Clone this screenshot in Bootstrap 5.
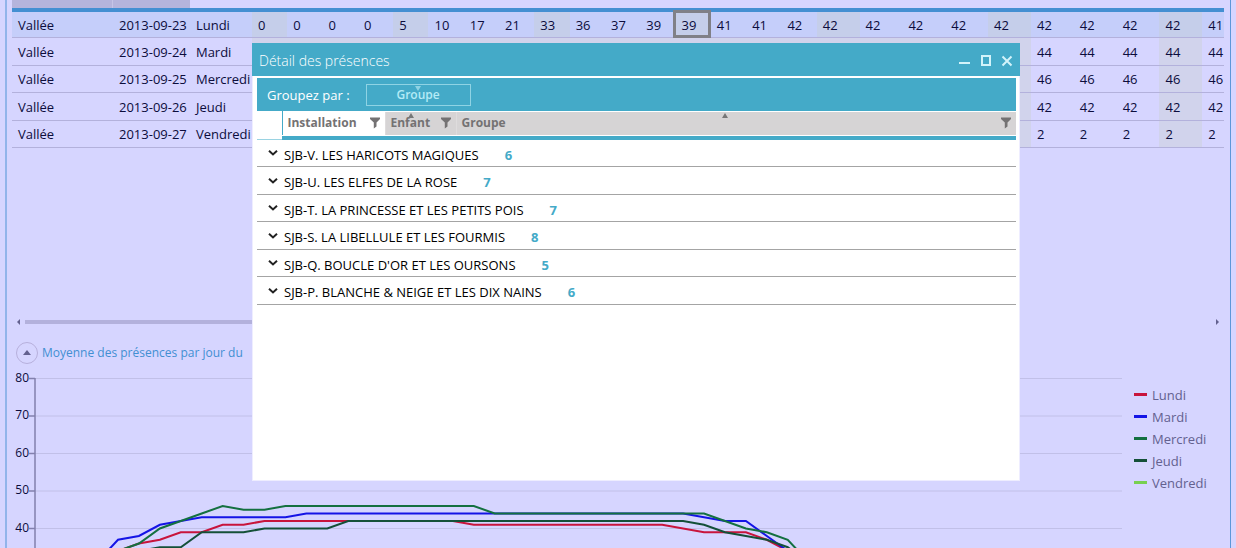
<!DOCTYPE html>
<html lang="fr">
<head>
<meta charset="utf-8">
<meta name="viewport" content="width=device-width, initial-scale=1">
<title>Détail des présences</title>
<link rel="stylesheet" href="https://cdn.jsdelivr.net/npm/bootstrap@5.3.0/dist/css/bootstrap.min.css">
<style>
body{background:#d6d5ff;font-family:"Open Sans","Noto Sans",sans-serif;font-size:13px;line-height:20px;color:#0c0c3c}
.panel{border-left:2px solid #92b4ea;border-right:1px solid #5c97d8;margin:0 5px 0 5px;padding:0 6px 0 5px}
.presence{table-layout:fixed;--bs-table-bg:transparent;--bs-table-color:#0c0c3c}
.presence th,.presence td{padding:1px 0 0 6px;height:27px;border-bottom:1px solid #b3b1dc;white-space:nowrap;vertical-align:middle}
.presence tbody tr:nth-child(even) td{height:28px}
.presence thead th{height:10px;border-bottom:4px solid #448fd2;padding:0;box-shadow:none}
.presence thead th.grip{background:#b5b4dc}
.presence thead th.grip+.grip{border-left:1px solid #c5c4e6}
.presence thead th.blank{background:#d6d5ff}
.presence .c-site{width:8.33%}.presence .c-date{width:6.35%}.presence .c-day{width:5.12%}
.presence .c-hour{width:2.913%}.presence .c-wide{width:3.535%}.presence .c-last{width:1.77%}
.presence .shade{background:#d1d3ec}
.presence tr.chosen td{background:#c5cefa}
.presence tr.chosen td.dim{background:#c5ceea}
.presence td.current{position:relative}
.presence td.current::after{content:"";position:absolute;inset:-2px 0 -1px -3px;border:3px solid #808087}
.track{height:12px;margin-top:168px}
.thumb{height:4px;width:70%;background:#b3b1dc;margin-left:4px}
.title-row{margin-top:14px}
.collapser{width:22px;height:22px;border:1px solid #b7b0dc;border-radius:50%;background:none;padding:0}
.chart-title{font-size:12px;color:#428fd2;white-space:nowrap}
.chart-row{margin-top:5px}
.scale-y{width:17px;height:168px}
.scale-y span{line-height:18px;font-size:12px}
.plot{height:179px;min-width:0}
.legend-box{width:94px;color:#63618f;padding-top:15px}
.legend-box li{height:22px;line-height:22px}
.swatch{width:13px;height:3px;margin-right:5px}
.dialog-win{position:absolute;left:252px;right:216px;top:43px;height:438px;background:#fff;border:1px solid #eeedff;border-top:0;color:#000}
.title-bar{background:#44aac8;color:#fff;height:33px;margin:0 -1px;padding:2px 3px 0 7px;font-size:14px;font-weight:300}
.title-bar button{border:0;background:none;padding:0;width:21px;height:20px;line-height:0}
.group-bar{background:#44aac8;color:#fff;height:33px;padding:0 10px}
.group-chip{border:1px solid #8fd3e4;background:none;color:#b4ebf6;width:105px;height:22px;line-height:20px;padding:0;position:relative;font-size:12px;font-weight:600}
.mini-arrow{position:absolute;left:50%;width:6px;height:5px;margin-left:-3px;top:1px}
.detail-body{margin:2px 3px 0 4px}
.detail{table-layout:fixed;--bs-table-bg:transparent;border-color:#a4a4a4}
.detail th{height:24px;padding:0 5px 2px;border:solid #fff;border-width:1px 0;background:#d6d4d5;color:#747273;position:relative;line-height:20px;box-shadow:none;font-size:12px}
.detail th+th+th{border-left:1px solid #dedcdd}
.detail th.lead-cell,.detail th.active-col{background:#fff}
.detail th.lead-cell{border-right:1px solid #44aac8}
.detail .bluebar td{height:4px;padding:0;background:#44aac8;border:0;box-shadow:none}
.detail .bluebar td:first-child{background:#fff;border-bottom:1px solid #9ad3e2}
.detail tbody td{height:27px;padding:5px 0 0 2px;border-bottom:1px solid #a4a4a4;line-height:20px;white-space:nowrap;color:#000}
.detail tbody tr:nth-child(even) td{height:28px}
.detail b{color:#44aac8;margin-left:26px}
.detail tbody td.chev{padding:0 0 0 11px;line-height:0;vertical-align:middle}
.funnel{width:10px;height:12px}
</style>
<script src="https://cdn.jsdelivr.net/npm/bootstrap@5.3.0/dist/js/bootstrap.bundle.min.js"></script>
</head>
<body class="vh-100 overflow-hidden position-relative">
<svg class="d-none" aria-hidden="true"><defs>
<symbol id="funnel" viewBox="0 0 10 12"><path d="M0 .5h10v1.500L6.500 5.500V9.500L3.800 11.500V5.500L0 2z" fill="#747273"/></symbol>
<symbol id="chev" viewBox="0 0 10 6"><path d="M1 .8 5 4.500 9 .8" fill="none" stroke="#222" stroke-width="2"/></symbol>
<symbol id="up" viewBox="0 0 6 5"><path d="M3 0 6 5H0z" fill="#777"/></symbol>
</defs></svg>
<main class="panel vh-100 overflow-hidden">
<table class="table presence mb-0">
<colgroup><col class="c-site"><col class="c-date"><col class="c-day">
<col class="c-hour shade"><col class="c-hour" span="3"><col class="c-hour shade"><col class="c-hour" span="3"><col class="c-hour shade"><col class="c-hour" span="3"><col class="c-hour shade"><col class="c-hour" span="3">
<col class="c-wide shade"><col class="c-wide" span="3"><col class="c-wide shade"><col class="c-wide" span="3"><col class="c-wide shade"><col class="c-last"></colgroup>
<thead><tr><th class="grip"></th><th class="grip"></th><th class="blank" colspan="27"></th></tr></thead>
<tbody>
<tr class="chosen"><td>Vallée</td><td>2013-09-23</td><td>Lundi</td><td class="dim">0</td><td>0</td><td>0</td><td>0</td><td class="dim">5</td><td>10</td><td>17</td><td>21</td><td class="dim">33</td><td>36</td><td>37</td><td>39</td><td class="dim current">39</td><td>41</td><td>41</td><td>42</td><td class="dim">42</td><td>42</td><td>42</td><td>42</td><td class="dim">42</td><td>42</td><td>42</td><td>42</td><td class="dim">42</td><td>41</td></tr>
<tr><td>Vallée</td><td>2013-09-24</td><td>Mardi</td><td colspan="21"></td><td>44</td><td>44</td><td>44</td><td>44</td><td>44</td></tr>
<tr><td>Vallée</td><td>2013-09-25</td><td>Mercredi</td><td colspan="21"></td><td>46</td><td>46</td><td>46</td><td>46</td><td>46</td></tr>
<tr><td>Vallée</td><td>2013-09-26</td><td>Jeudi</td><td colspan="21"></td><td>42</td><td>42</td><td>42</td><td>42</td><td>42</td></tr>
<tr><td>Vallée</td><td>2013-09-27</td><td>Vendredi</td><td colspan="21"></td><td>2</td><td>2</td><td>2</td><td>2</td><td>2</td></tr>
</tbody></table>
<div class="track d-flex align-items-center px-1">
<svg width="5" height="8"><path d="M4 1v6L1 4z" fill="#63618f"/></svg><div class="thumb"></div>
<svg class="ms-auto" width="5" height="8"><path d="M1 1v6L4 4z" fill="#63618f"/></svg>
</div>
<div class="title-row d-flex align-items-center px-1">
<button class="collapser d-flex align-items-center justify-content-center me-1" aria-label="Réduire"><svg width="8" height="5"><path d="M4 0 8 5H0z" fill="#63618f"/></svg></button>
<span class="chart-title">Moyenne des présences par jour du</span>
</div>
<section class="chart-row d-flex">
<div class="scale-y d-flex flex-column justify-content-between text-end"><span>80</span><span>70</span><span>60</span><span>50</span><span>40</span></div>
<svg class="plot flex-grow-1" viewBox="29 369 1093 179" preserveAspectRatio="none" fill="none">
<path d="M35 378.500H1122M35 416H1122M35 453.500H1122M35 491H1122M35 528.500H1122" stroke="#c1c0e8"/>
<path d="M29 378.500h6M29 416h6M29 453.500h6M29 491h6M29 528.500h6M35 378V548" stroke="#8280ad" stroke-width="1.500"/>
<g stroke-width="2" id="series"></g>
</svg>
<ul class="legend-box list-unstyled mb-0 ms-2 ps-1" id="legend"></ul>
</section>
</main>

<div class="dialog-win" role="dialog" aria-label="Détail des présences">
<div class="title-bar d-flex align-items-center"><span class="me-auto">Détail des présences</span>
<button aria-label="Réduire"><svg width="12" height="12"><path d="M0 8h11" stroke="#d2f3fa" stroke-width="2"/></svg></button>
<button aria-label="Agrandir"><svg width="12" height="12"><path d="M2 1h8v9H2z" fill="none" stroke="#d2f3fa" stroke-width="2"/></svg></button>
<button aria-label="Fermer"><svg width="12" height="12"><path d="M1.500 1.500l9 9M10.500 1.500l-9 9" stroke="#d2f3fa" stroke-width="2"/></svg></button></div>
<div class="detail-body">
<div class="group-bar d-flex align-items-center"><span>Groupez par :</span>
<button class="group-chip ms-3">Groupe<svg class="mini-arrow" viewBox="0 0 6 5"><path d="M0 0h6L3 5z" fill="#8fd3e4"/></svg></button></div>
<table class="table detail mb-0">
<colgroup><col style="width:25px"><col style="width:103px"><col style="width:71px"><col></colgroup>
<thead><tr><th class="lead-cell"></th>
<th class="active-col"><div class="d-flex justify-content-between align-items-center">Installation<svg class="funnel"><use href="#funnel"/></svg></div></th>
<th><div class="d-flex justify-content-between align-items-center">Enfant<svg class="funnel"><use href="#funnel"/></svg></div><svg class="mini-arrow" style="left:36%"><use href="#up"/></svg></th>
<th><div class="d-flex justify-content-between align-items-center">Groupe<svg class="funnel"><use href="#funnel"/></svg></div><svg class="mini-arrow" style="left:48%"><use href="#up"/></svg></th></tr>
<tr class="bluebar"><td></td><td colspan="3"></td></tr></thead>
<tbody>
<tr><td class="chev"><svg width="10" height="6"><use href="#chev"/></svg></td><td colspan="3">SJB-V. LES HARICOTS MAGIQUES<b>6</b></td></tr>
<tr><td class="chev"><svg width="10" height="6"><use href="#chev"/></svg></td><td colspan="3">SJB-U. LES ELFES DE LA ROSE<b>7</b></td></tr>
<tr><td class="chev"><svg width="10" height="6"><use href="#chev"/></svg></td><td colspan="3">SJB-T. LA PRINCESSE ET LES PETITS POIS<b>7</b></td></tr>
<tr><td class="chev"><svg width="10" height="6"><use href="#chev"/></svg></td><td colspan="3">SJB-S. LA LIBELLULE ET LES FOURMIS<b>8</b></td></tr>
<tr><td class="chev"><svg width="10" height="6"><use href="#chev"/></svg></td><td colspan="3">SJB-Q. BOUCLE D'OR ET LES OURSONS<b>5</b></td></tr>
<tr><td class="chev"><svg width="10" height="6"><use href="#chev"/></svg></td><td colspan="3">SJB-P. BLANCHE &amp; NEIGE ET LES DIX NAINS<b>6</b></td></tr>
</tbody></table>
</div></div>
<script>
// Each series: name, colour, then [index, value] turning points along the time axis
const series=[
["Lundi","#c8143c",[[0,34],[1,36],[2,37],[3,39],[4,39],[5,41],[6,41],[7,42],[16,42],[17,41],[26,41],[28,39],[30,39],[31,37],[32,34]]],
["Mardi","#1414e6",[[-1,31],[0,37],[1,38],[2,41],[3,42],[4,43],[8,43],[9,44],[27,44],[29,42],[30,42],[31,38],[32,34]]],
["Mercredi","#147040",[[0,34],[1,36],[2,40],[3,42],[4,44],[5,46],[6,45],[7,45],[8,46],[17,46],[18,44],[28,44],[29,42],[30,40],[31,39],[32,37],[33,31]]],
["Jeudi","#145038",[[0,33],[1,34],[2,35],[3,35],[4,39],[6,39],[7,40],[10,40],[11,42],[27,42],[28,41],[29,39],[30,38],[31,37],[32,35],[33,31]]],
["Vendredi","#78d050",[]]];
const g=document.getElementById("series"),ul=document.getElementById("legend");
for(const [name,color,pts] of series){
 const p=document.createElementNS("http://www.w3.org/2000/svg","polyline");
 p.setAttribute("stroke",color);
 p.setAttribute("points",pts.map(([i,v])=>(118+i*20.93)+","+(528.5-(v-40)*3.75)).join(" "));
 g.append(p);
 ul.insertAdjacentHTML("beforeend",`<li class="d-flex align-items-center"><span class="swatch" style="background:${color}"></span>${name}</li>`);
}
</script>
</body>
</html>
